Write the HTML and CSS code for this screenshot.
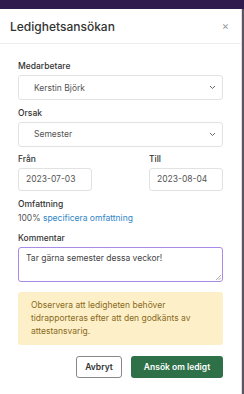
FILE: index.html
```html
<!DOCTYPE html>
<html lang="sv">
<head>
  <meta charset="UTF-8">
  <meta name="viewport" content="width=device-width, initial-scale=1.0">
  <title>Ledighetsansökan</title>
  <link rel="stylesheet" href="styles.css">
</head>
<body>
  <div class="topbar"></div>
  <div class="modal">
    <div class="modal-header">
      <h1>Ledighetsansökan</h1>
      <span class="close">&times;</span>
    </div>
    <div class="modal-body">
      <div class="field">
        <label>Medarbetare</label>
        <div class="select">
          <span>Kerstin Björk</span>
          <svg width="7" height="5" viewBox="0 0 7 5"><path d="M1 1l2.5 2.5L6 1" fill="none" stroke="#666" stroke-width="1"/></svg>
        </div>
      </div>
      <div class="field">
        <label>Orsak</label>
        <div class="select">
          <span>Semester</span>
          <svg width="7" height="5" viewBox="0 0 7 5"><path d="M1 1l2.5 2.5L6 1" fill="none" stroke="#666" stroke-width="1"/></svg>
        </div>
      </div>
      <div class="dates">
        <div class="field">
          <label>Från</label>
          <div class="input">2023-07-03</div>
        </div>
        <div class="field">
          <label>Till</label>
          <div class="input">2023-08-04</div>
        </div>
      </div>
      <div class="field">
        <label>Omfattning</label>
        <p class="scope">100% <a href="#">specificera omfattning</a></p>
      </div>
      <div class="field">
        <label>Kommentar</label>
        <div class="textarea">Tar gärna semester dessa veckor!
          <svg class="grip" width="6" height="6" viewBox="0 0 6 6"><path d="M1 6L6 1M3.5 6L6 3.5" stroke="#999" stroke-width="0.8"/></svg>
        </div>
      </div>
      <div class="notice">Observera att ledigheten behöver tidrapporteras efter att den godkänts av attestansvarig.</div>
      <div class="actions">
        <button class="btn-cancel">Avbryt</button>
        <button class="btn-primary">Ansök om ledigt</button>
      </div>
    </div>
  </div>
</body>
</html>
```
FILE: styles.css
```css
body {
  margin: 0;
  font-family: Inter, "Noto Sans", sans-serif;
  background-color: #5a5463;
  color: #333;
  height: 394px;
  overflow: hidden;
}
.topbar {
  height: 9px;
  background-color: #2f1b4d;
}
.modal {
  width: 242px;
  height: 385px;
  background-color: #fff;
  border-right: 1px solid #ddd;
  box-sizing: border-box;
}
.modal-header {
  display: flex;
  justify-content: space-between;
  align-items: center;
  height: 34px;
  padding: 0 10px;
  border-bottom: 1px solid #eee;
}
.modal-header h1 {
  margin: 0;
  font-size: 12px;
  font-weight: 500;
  color: #333;
}
.close {
  font-size: 11px;
  color: #999;
  margin-right: 2px;
}
.modal-body {
  padding: 17px 18px 0 18px;
}
.field {
  margin-bottom: 7.5px;
}
.field label {
  display: block;
  font-size: 8.5px;
  font-weight: 500;
  color: #333;
  margin-bottom: 4px;
}
.select {
  display: flex;
  justify-content: space-between;
  align-items: center;
  height: 25px;
  padding: 0 6px 0 15px;
  border: 1px solid #e2e2e2;
  border-radius: 3px;
  font-size: 8.5px;
  color: #555;
  box-sizing: border-box;
}
.dates {
  display: flex;
  justify-content: space-between;
}
.dates .field {
  width: 74px;
}
.input {
  height: 23px;
  line-height: 21px;
  padding: 0 7px;
  border: 1px solid #e2e2e2;
  border-radius: 3px;
  font-size: 8.5px;
  color: #555;
  box-sizing: border-box;
}
.scope {
  margin: 0 0 10px 0;
  font-size: 8.5px;
  color: #555;
}
.scope a {
  color: #2f86c8;
  text-decoration: none;
}
.textarea {
  position: relative;
  height: 35px;
  padding: 5px 7px;
  border: 1px solid #a98ae6;
  border-radius: 3px;
  font-size: 8.5px;
  color: #444;
  box-sizing: border-box;
}
.grip {
  position: absolute;
  right: 1px;
  bottom: 1px;
}
.notice {
  margin-top: 10px;
  padding: 7px 12px 7px 13px;
  background-color: #fdf0c9;
  border-radius: 3px;
  font-size: 8.5px;
  line-height: 13px;
  color: #8a6a1c;
}
.actions {
  display: flex;
  justify-content: flex-end;
  gap: 9px;
  margin-top: 11px;
}
.actions button {
  height: 22px;
  font-family: inherit;
  font-size: 8.5px;
  font-weight: 600;
  border-radius: 3px;
  cursor: pointer;
}
.btn-cancel {
  width: 46px;
  background-color: #fff;
  color: #333;
  border: 1px solid #888;
}
.btn-primary {
  width: 92px;
  background-color: #2e7047;
  color: #fff;
  border: none;
}
```
